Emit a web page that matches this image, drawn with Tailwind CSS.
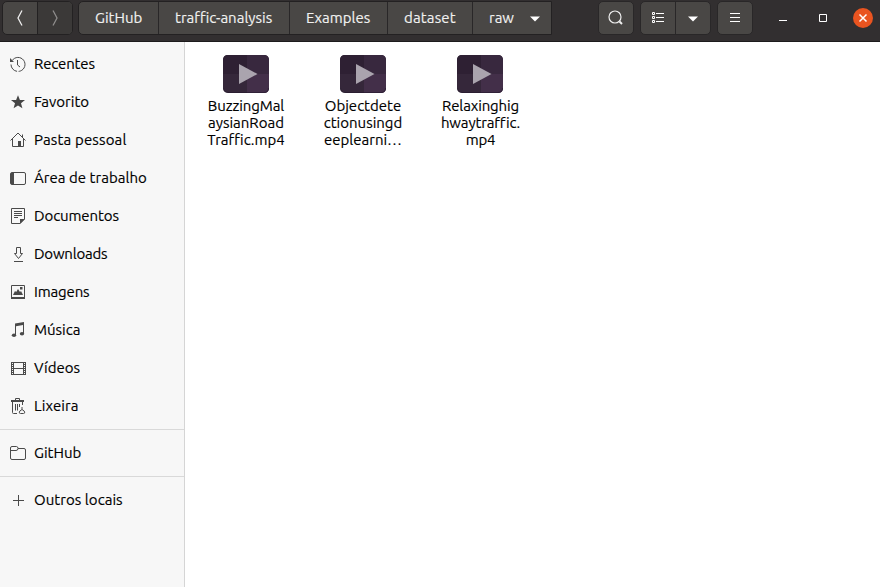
<!DOCTYPE html>
<html lang="pt-BR">
<head>
<meta charset="utf-8">
<title>raw</title>
<script src="https://cdn.jsdelivr.net/npm/@tailwindcss/browser@4"></script>
</head>
<body class="flex h-[587px] w-[880px] flex-col overflow-hidden bg-white font-['Ubuntu','Noto_Sans',sans-serif] text-[15px] text-black [-webkit-text-stroke:0.15px]">
<svg class="hidden">
  <symbol id="video" viewBox="0 0 46 38">
    <rect width="46" height="38" rx="5" fill="#35273a"/>
    <path d="M5 0H24V19H0V5Q0 0 5 0Z" fill="#2e2033"/>
    <path d="M24 19H46V33Q46 38 41 38H24Z" fill="#432f49"/>
    <path d="M24 0H41Q46 0 46 5V19H24Z" fill="#38283e"/>
    <path d="M.5 33Q.5 37.500 5 37.500H41Q45.500 37.500 45.500 33" fill="none" stroke="#21162a" stroke-opacity=".55"/>
    <path d="M16 9L34.500 19L16 29Z" fill="#aaa4ae"/>
  </symbol>
</svg>
<header class="flex h-[42px] shrink-0 items-start border-b border-[#1d1b1c] bg-[#322f30] pt-[1px] pl-[2px] text-[#f1f1f0]">
  <div class="flex h-[34px] w-[71px] overflow-hidden rounded-[5px] border border-[#232122] bg-[#494745]">
    <div class="flex w-[34px] items-center justify-center">
      <svg class="size-4" viewBox="0 0 16 16" fill="none" stroke="#eee" stroke-width="1.3"><path d="M10 .5L6 8L10 15.500"/></svg>
    </div>
    <div class="flex flex-1 items-center justify-center border-l border-[#232122] bg-[#3b3938]">
      <svg class="size-4" viewBox="0 0 16 16" fill="none" stroke="#8e8c8b" stroke-width="1.3"><path d="M6 .5L10 8L6 15.500"/></svg>
    </div>
  </div>
  <nav class="ml-[5px] flex h-[34px] w-[474px] overflow-hidden rounded-l-[5px] border border-[#232122] bg-[#494745] leading-[32px]">
    <div class="w-[79px] pl-[16px]">GitHub</div>
    <div class="w-[131px] border-l border-[#292728] pl-[16px]">traffic-analysis</div>
    <div class="w-[98px] border-l border-[#292728] pl-[16px]">Examples</div>
    <div class="w-[85px] border-l border-[#292728] pl-[16px] tracking-[0.15px]">dataset</div>
    <div class="flex flex-1 items-center border-l border-[#292728] pl-[16px]"><span class="w-[41px]">raw</span><svg class="mt-px h-[6px] w-[10px]" viewBox="0 0 10 6"><path d="M0 .5H10L5 5.500Z" fill="#fff"/></svg></div>
  </nav>
  <div class="ml-[46px] flex h-[34px] w-[36px] items-center justify-center rounded-[5px] border border-[#292728] bg-[#494745]">
    <svg class="size-4" viewBox="0 0 16 16" fill="none" stroke="#eee" stroke-width="1.2"><circle cx="7" cy="7" r="6"/><path d="M11.500 11.500L14 14" stroke-width="2"/></svg>
  </div>
  <div class="ml-[6px] flex h-[34px] w-[71px] rounded-[5px] border border-[#292728] bg-[#494745]">
    <div class="flex w-[34px] items-center justify-center">
      <svg class="size-4" viewBox="0 0 16 16" fill="none" stroke="#fff"><path d="M2.500 2.500h2v2h-2zM2.500 6.500h2v2h-2zM2.500 10.500h2v2h-2zM6 3.500h8M6 7.500h8M6 11.500h8"/></svg>
    </div>
    <div class="flex flex-1 items-center justify-center border-l border-[#292728]">
      <svg class="mt-px h-[6px] w-[10px]" viewBox="0 0 10 6"><path d="M0 .5H10L5 5.500Z" fill="#fff"/></svg>
    </div>
  </div>
  <div class="ml-[6px] flex h-[34px] w-[36px] items-center justify-center rounded-[5px] border border-[#292728] bg-[#494745]">
    <svg class="size-4" viewBox="0 0 16 16" stroke="#fff"><path d="M3 3.500h10M3 7.500h10M3 11.500h10"/></svg>
  </div>
  <svg class="ml-[22px] mt-[9px] size-4" viewBox="0 0 16 16" stroke="#fff"><path d="M4 10.500h8"/></svg>
  <svg class="ml-[24px] mt-[9px] size-4" viewBox="0 0 16 16" fill="none" stroke="#fff"><path d="M4.500 4.500h7v7h-7z"/></svg>
  <svg class="ml-[22px] mt-[7px] size-5" viewBox="0 0 20 20"><circle cx="10" cy="10" r="10" fill="#e95420"/><path d="M6.500 6.500L13.500 13.500M13.500 6.500L6.500 13.500" stroke="#fff" stroke-width="1.5"/></svg>
</header>
<div class="flex min-h-0 flex-1">
  <aside class="w-[185px] shrink-0 border-r border-[#d5d5d5] bg-[#f7f7f7] pt-[3px]">
    <ul class="leading-[38px] [&_svg]:size-4 [&_svg]:shrink-0 [&_li]:flex [&_li]:h-[38px] [&_li]:items-center [&_li]:gap-2 [&_li]:pl-[10px]">
      <li><svg viewBox="0 0 16 16" fill="none" stroke="#4a4a4a"><path d="M2.200 4.500A7 7 0 1 1 1 8.500" stroke-dasharray="28 1.500"/><path d="M0 2v4h4z" fill="#4a4a4a" stroke="none"/><path d="M7.500 4v5l2.500 2"/></svg><span class="tracking-[-0.15px]">Recentes</span></li>
      <li><svg viewBox="0 0 16 16" fill="#454545"><path d="M8 1.200L9.900 6H15L11 9.200L12.400 14.300L8 11.400L3.600 14.300L5 9.200L1 6H6.100Z"/></svg><span>Favorito</span></li>
      <li><svg viewBox="0 0 16 16" fill="none" stroke="#4a4a4a"><path d="M.5 8.500L8 1L15.500 8.500M2.500 7v7.500h11V7M12.500 5V2.500"/><path d="M8 9h3v6H8z" fill="#4a4a4a" stroke="none"/></svg><span class="tracking-[0.15px]">Pasta pessoal</span></li>
      <li><svg viewBox="0 0 16 16" fill="none" stroke="#4a4a4a"><rect x=".5" y="2.500" width="15" height="12" rx="1.500"/><path d="M1 3h3v11H1z" fill="#4a4a4a" stroke="none"/></svg><span class="tracking-[0.03px]">Área de trabalho</span></li>
      <li><svg viewBox="0 0 16 16" fill="none" stroke="#4a4a4a"><path d="M1.500.5h13V11l-4.500 4.500H1.500zM4 3.500h8M4 5.500h8M4 7.500h8M4 9.500h4"/><path d="M10 11h5l-5 5z" fill="#4a4a4a" stroke="none"/></svg><span class="tracking-[-0.1px]">Documentos</span></li>
      <li><svg viewBox="0 0 16 16" fill="none" stroke="#4a4a4a"><path d="M6.500 1.500h4v6h2L8.500 12.500L4.500 7.500h2zM4 15.500h9"/></svg><span class="tracking-[-0.22px]">Downloads</span></li>
      <li><svg viewBox="0 0 16 16" fill="none" stroke="#4a4a4a"><path d="M1.500 1.500h13v12h-13z"/><path d="M1 13h14v2H1zM3 11l2-4 1.200 1L8 5l2 3 1-1 2 4zM10 3h2.500v2.500H10z" fill="#4a4a4a" stroke="none"/></svg><span class="tracking-[-0.15px]">Imagens</span></li>
      <li><svg viewBox="0 0 16 16" fill="#4a4a4a"><path d="M5 1.500L14 0V12H13V3L6 4.200V13.500H5Z"/><ellipse cx="4" cy="13.300" rx="2.200" ry="1.700"/><ellipse cx="12" cy="11.800" rx="2.200" ry="1.700"/></svg><span>Música</span></li>
      <li><svg viewBox="0 0 16 16" fill="none" stroke="#4a4a4a"><path d="M1.500 2v13M15.500 2v13M3.500 2v13M13.500 2v13M1 2.500h15M1 14.500h15M4 8.500h9"/><path d="M2.500 2v13M14.500 2v13" stroke-dasharray="1 1"/></svg><span>Vídeos</span></li>
      <li><svg viewBox="0 0 16 16" fill="none" stroke="#4a4a4a"><path d="M1 2h13v2H1z" fill="#4a4a4a" stroke="none"/><path d="M5.500 2V.5h4V2M2.500 4v10.500q0 1 1 1H7M12.500 4v3M5.500 6v6.500M7.500 6v6.500M9.500 6v3"/><path d="M12 9v2.500l2.200 1.500q1.500 2.500-.7 2.500h-3q-2.200 0-.7-2.500L12 11.500"/></svg><span class="tracking-[0.1px]">Lixeira</span></li>
      <li class="mt-[4px] box-content border-t border-[#d9d9d9] pt-[4px]"><svg viewBox="0 0 16 16" fill="none" stroke="#4a4a4a"><path d="M.5 13V3Q.5 1.500 2 1.500H6.500Q8 1.500 8 3.500H14Q15.500 3.500 15.500 5V13Q15.500 14.500 14 14.500H2Q.5 14.500.5 13ZM.5 5.500H6Q8 5.500 8 3.500"/></svg><span>GitHub</span></li>
      <li class="mt-[4px] box-content border-t border-[#d9d9d9] pt-[4px]"><svg viewBox="0 0 16 16" stroke="#4a4a4a"><path d="M3 8.500h11M8.500 3v11"/></svg><span class="tracking-[0.05px]">Outros locais</span></li>
    </ul>
  </aside>
  <main class="flex flex-1 gap-[27px] pt-[13px] pl-[16px] text-center leading-[17px]">
    <figure class="flex w-[90px] flex-col items-center"><svg class="mb-[4px] h-[38px] w-[46px]"><use href="#video"/></svg><figcaption><span class="tracking-[-0.1px]">BuzzingMal</span><br>aysianRoad<br>Traffic.mp4</figcaption></figure>
    <figure class="flex w-[90px] flex-col items-center"><svg class="mb-[4px] h-[38px] w-[46px]"><use href="#video"/></svg><figcaption>Objectdete<br>ctionusingd<br>eeplearni…</figcaption></figure>
    <figure class="flex w-[90px] flex-col items-center"><svg class="mb-[4px] h-[38px] w-[46px]"><use href="#video"/></svg><figcaption class="pl-px tracking-[-0.15px]">Relaxinghig<br>hwaytraffic.<br>mp4</figcaption></figure>
  </main>
</div>
</body>
</html>
